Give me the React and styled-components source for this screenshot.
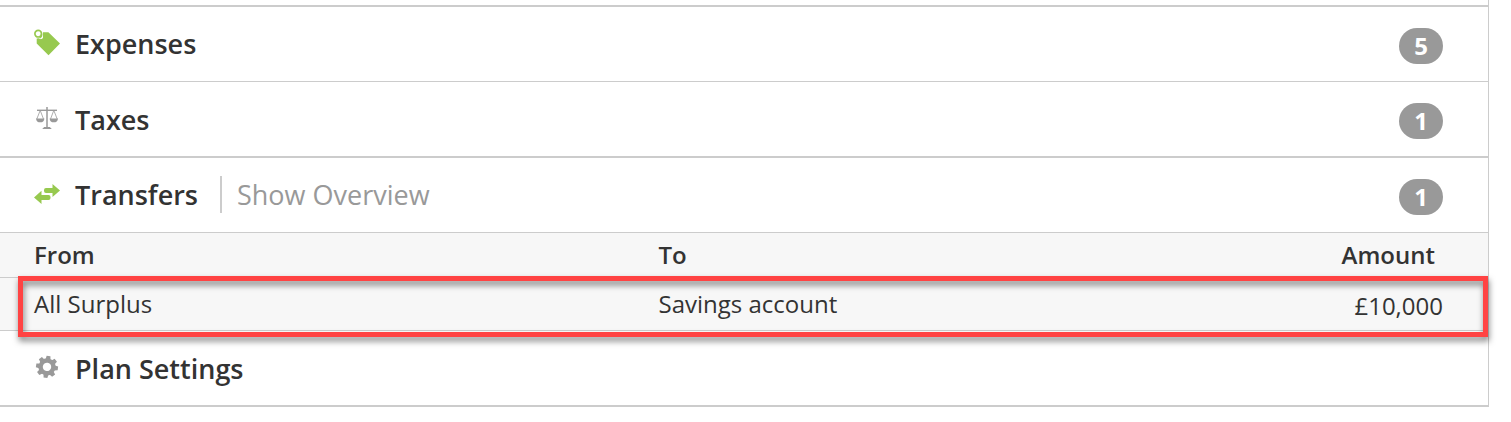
import React from 'react'
import styled, { createGlobalStyle } from 'styled-components';

const GlobalStyle = createGlobalStyle`
    * {
        box-sizing: border-box;
    }
    body {
        margin: 0;
        background-color: #fff;
        color: #333;
        font-family: "Open Sans", "Noto Sans", sans-serif;
        overflow: hidden;
    }
`

const Panel = styled.div`
    width: 1489px;
    height: 407px;
    padding-top: 5px;
    border-right: 1px solid #ccc;
    border-bottom: 2px solid #ccc;
`

const Section = styled.div`
    height: ${(props) => props.$height}px;
    border-top: ${(props) => props.$line}px solid #ccc;
    padding: ${(props) => (props.$line === 1 ? 1 : 0)}px 45px 0 34px;
    display: flex;
    align-items: center;
`

const IconBox = styled.svg`
    width: 26px;
    height: 26px;
    margin: 0 15px 3px 0;
    flex: none;
    overflow: visible;
    color: ${(props) => (props.$active ? '#97c94f' : '#999')};
`

const Title = styled.h2`
    margin: 0;
    font-size: 27px;
    line-height: 36px;
    font-weight: 600;
`

const Overview = styled.span`
    height: 37px;
    margin: 0 0 1px 22px;
    padding-left: 15px;
    border-left: 2px solid #ccc;
    font-size: 27px;
    line-height: 38px;
    color: #999;
`

const Badge = styled.span`
    width: 44px;
    height: 36px;
    margin: ${(props) => (props.$top || 3)}px 0 0 auto;
    border-radius: 18px;
    background-color: #999;
    color: #fff;
    font-size: 24px;
    font-weight: 700;
    line-height: 36px;
    text-align: center;
`

const Row = styled.div`
    height: ${(props) => props.$height}px;
    border-top: 1px solid #ccc;
    background-color: #f7f7f7;
    padding: 0 45px 0 34px;
    display: grid;
    grid-template-columns: 624.5px 1fr auto;
    font-size: 24px;
    line-height: 44px;
`

const HeadCell = styled.div`
    font-weight: 600;
    padding-right: ${(props) => (props.$last ? 8 : 0)}px;
`

const Cell = styled.div`
    padding-top: ${(props) => props.$top}px;
`

const Highlighted = styled.div`
    position: relative;
`

const Highlight = styled.div`
    position: absolute;
    top: -1px;
    left: 18px;
    width: 1470px;
    height: 61px;
    border: 5px solid #ff4343;
    filter: drop-shadow(1px 4px 3px rgba(0, 0, 0, 0.5));
`

const TagIcon = () => (
  <IconBox $active viewBox='0 0 26 26'>
    <path d='M9 2.2H14.4L26 13.6 14.5 25.2 2.7 13.6V8.6L5 8.2 7 9.2 9 7.2Z' fill='currentColor' />
    <circle cx='7' cy='7' r='2' fill='#fff' />
    <circle cx='4.2' cy='3.7' r='3.3' fill='none' stroke='currentColor' strokeWidth='1.7' />
    <path d='M7.4 3.6C8.2 5.2 7.6 7.2 5.8 8' stroke='currentColor' strokeWidth='1.3' fill='none' />
  </IconBox>
)

const ScalesIcon = () => (
  <IconBox viewBox='0 0 26 26'>
    <g fill='none' stroke='currentColor'>
      <path d='M13 2V22.5' strokeWidth='1.5' />
      <path d='M3 5.3H23' strokeWidth='1.4' />
      <path d='M6.2 5.4 2.8 14M6.2 5.4 9.5 14M19.8 5.4 16.5 14M19.8 5.4 23.2 14' strokeWidth='0.8' />
    </g>
    <path d='M2 13.4H10.4C10.2 16 8.6 17.3 6.2 17.3S2.2 16 2 13.4ZM15.6 13.4H24C23.8 16 22.2 17.3 19.8 17.3S15.8 16 15.6 13.4ZM10.2 22H15.8L17.8 24H8.2Z' fill='currentColor' />
  </IconBox>
)

const TransferIcon = () => (
  <IconBox $active viewBox='0 0 26 26'>
    <path d='M10 9Q10 7 12 7H18.5V3L26 9.5 18.5 16V12H12Q10 12 10 10Z' fill='currentColor' />
    <path d='M16.5 17Q16.5 19 14.5 19H7.5V23L0 16.5 7.5 9.8V14H14.5Q16.5 14 16.5 16Z' fill='currentColor' />
  </IconBox>
)

const GearIcon = () => (
  <IconBox viewBox='0 0 26 26'>
    <g transform='translate(13 12.9) rotate(8)'>
      {[0, 45, 90, 135, 180, 225, 270, 315].map((angle) => (
        <path key={angle} d='M-2.5-7.5-1.9-11H1.9L2.5-7.5Z' transform={`rotate(${angle})`} fill='currentColor' />
      ))}
      <circle r='6.4' fill='none' stroke='currentColor' strokeWidth='4.4' />
    </g>
  </IconBox>
)

const App = () => {
  return (
    <>
      <GlobalStyle />
      <Panel>
        <Section $height={76} $line={2}>
          <TagIcon />
          <Title>Expenses</Title>
          <Badge>5</Badge>
        </Section>
        <Section $height={75} $line={1}>
          <ScalesIcon />
          <Title>Taxes</Title>
          <Badge $top={2}>1</Badge>
        </Section>
        <Section $height={76} $line={2}>
          <TransferIcon />
          <Title>Transfers</Title>
          <Overview>Show Overview</Overview>
          <Badge>1</Badge>
        </Section>
        <Row $height={45}>
          <HeadCell>From</HeadCell>
          <HeadCell>To</HeadCell>
          <HeadCell $last>Amount</HeadCell>
        </Row>
        <Highlighted>
          <Row $height={53}>
            <Cell $top={4}>All Surplus</Cell>
            <Cell $top={4}>Savings account</Cell>
            <Cell $top={6}>£10,000</Cell>
          </Row>
          <Highlight />
        </Highlighted>
        <Section $height={75} $line={1}>
          <GearIcon />
          <Title>Plan Settings</Title>
        </Section>
      </Panel>
    </>
  )
}

export default App
